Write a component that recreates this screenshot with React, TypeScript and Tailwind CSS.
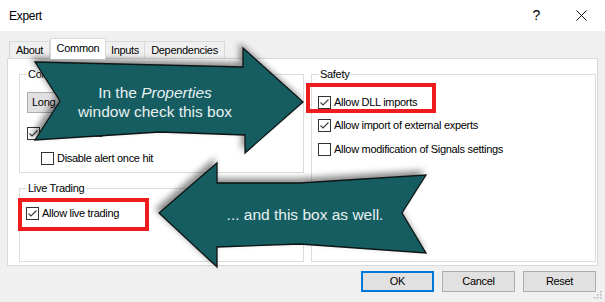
import React from "react";

const Check = ({ checked }: { checked?: boolean }) => (
  <span className="w-[13px] h-[13px] border border-[#333333] bg-white flex items-center justify-center shrink-0">
    {checked && (
      <svg width="11" height="11" viewBox="0 0 11 11">
        <path d="M1.5 5.5 L4 8 L9.5 2.5" fill="none" stroke="#3a3a3a" strokeWidth="1.1" />
      </svg>
    )}
  </span>
);

const Row = ({ checked, label, className = "" }: { checked?: boolean; label: string; className?: string }) => (
  <div className={"flex items-center h-[13px] " + className}>
    <Check checked={checked} />
    <span className="ml-[3px] leading-[13px] whitespace-nowrap">{label}</span>
  </div>
);

const Group = ({ title, className, children }: { title: string; className: string; children: React.ReactNode }) => (
  <div className={"relative border border-[#dcdcdc] " + className}>
    <span className="absolute top-[-8px] left-[7px] bg-white px-[1px] leading-[14px] whitespace-nowrap">{title}</span>
    {children}
  </div>
);

const Btn = ({ label, primary }: { label: string; primary?: boolean }) => (
  <div
    className={
      "w-[73px] h-[21px] flex items-center justify-center bg-[#e1e1e1] " +
      (primary ? "border-2 border-[#0078d7]" : "border border-[#adadad]")
    }
  >
    {label}
  </div>
);

export default function App() {
  return (
    <div className="relative w-[605px] h-[302px] overflow-hidden bg-[#f0f0f0] text-[11px] tracking-[-0.3px] text-black font-['Liberation_Sans',Arial,sans-serif]">
      {/* Title bar */}
      <div className="h-[31px] bg-white flex items-center pl-[9px]">
        <span className="text-[12px]">Expert</span>
        <span className="ml-auto text-[14px] mr-[36px]">?</span>
        <svg width="11" height="11" viewBox="0 0 11 11" className="mr-[18px]">
          <path d="M0.5 0.5 L10.5 10.5 M10.5 0.5 L0.5 10.5" stroke="#111" strokeWidth="1" />
        </svg>
      </div>

      {/* Tabs */}
      <div className="pt-[7px] pl-[9px] flex items-end h-[27px]">
        <div className="w-[41px] h-[17px] border border-b-0 border-[#d9d9d9] flex items-center justify-center">About</div>
        <div className="w-[56px] h-[21px] bg-white border border-b-0 border-[#d9d9d9] flex items-center justify-center relative z-10 mb-[-1px] pb-[1px]">Common</div>
        <div className="w-[39px] h-[17px] border border-b-0 border-l-0 border-[#d9d9d9] flex items-center justify-center">Inputs</div>
        <div className="w-[80px] h-[17px] border border-b-0 border-l-0 border-[#d9d9d9] flex items-center justify-center">Dependencies</div>
      </div>

      {/* Panel */}
      <div className="ml-[7px] w-[591px] h-[208px] bg-white border border-[#d9d9d9] flex pl-[11px] pr-[1px] pt-[15px] gap-[7px]">
        <div className="w-[285px] flex flex-col">
          <Group title="Common" className="h-[99px] pl-[7px] pt-[17px]">
            <div className="w-[140px] h-[21px] bg-[#e1e1e1] border border-[#adadad] flex items-center pl-[4px]">Long</div>
            <Row checked label="Enable alerts" className="mt-[14px]" />
            <Row label="Disable alert once hit" className="mt-[12px] ml-[14px]" />
          </Group>
          <Group title="Live Trading" className="h-[74px] mt-[15px] pl-[6px] pt-[18px]">
            <Row checked label="Allow live trading" />
          </Group>
        </div>
        <Group title="Safety" className="w-[285px] h-[188px] pl-[6px] pt-[21px]">
          <Row checked label="Allow DLL imports" />
          <Row checked label="Allow import of external experts" className="mt-[10px]" />
          <Row label="Allow modification of Signals settings" className="mt-[11px]" />
        </Group>
      </div>

      {/* Buttons */}
      <div className="flex justify-end gap-[8px] pr-[9px] mt-[5px]">
        <Btn label="OK" primary />
        <Btn label="Cancel" />
        <Btn label="Reset" />
      </div>

      {/* Resize grip */}
      <svg className="absolute right-[3px] bottom-[3px]" width="9" height="9" viewBox="0 0 9 9">
        <rect x="7" y="1" width="1.5" height="1.5" fill="#b5b5b5" />
        <rect x="4" y="4" width="1.5" height="1.5" fill="#b5b5b5" />
        <rect x="7" y="4" width="1.5" height="1.5" fill="#b5b5b5" />
        <rect x="1" y="7" width="1.5" height="1.5" fill="#b5b5b5" />
        <rect x="4" y="7" width="1.5" height="1.5" fill="#b5b5b5" />
        <rect x="7" y="7" width="1.5" height="1.5" fill="#b5b5b5" />
      </svg>

      {/* Red highlight boxes */}
      <div className="absolute left-[306px] top-[83px] w-[130px] h-[30px] border-[4px] border-[#ee1c1c]" />
      <div className="absolute left-[18px] top-[198px] w-[131px] h-[33px] border-[4px] border-[#ee1c1c]" />

      {/* Arrows */}
      <svg className="absolute left-0 top-0 pointer-events-none" width="605" height="302" viewBox="0 0 605 302">
        <defs>
          <filter id="sh" x="-20%" y="-20%" width="140%" height="140%">
            <feDropShadow dx="-3" dy="-4" stdDeviation="3" floodColor="#000" floodOpacity="0.45" />
          </filter>
        </defs>
        <polygon
          points="35,62 243,67 243,48 303,102 245,153 245,135 160,132 35,140 60,101"
          fill="#175d62"
          stroke="#0d1414"
          strokeWidth="1.3"
          strokeLinejoin="miter"
          filter="url(#sh)"
        />
        <polygon
          points="159,213 217,163 217,183 300,183 426,175 402,213 426,253 300,244 217,247 217,267"
          fill="#175d62"
          stroke="#0d1414"
          strokeWidth="1.3"
          strokeLinejoin="miter"
          filter="url(#sh)"
        />
      </svg>
      <div className="absolute left-[55px] top-[83px] w-[200px] text-center text-[15.5px] leading-[19px] tracking-normal text-[#e8f1f1]">
        <div>
          In the <span className="italic">Properties</span>
        </div>
        <div>window check this box</div>
      </div>
      <div className="absolute left-[205px] top-[205px] w-[200px] text-center text-[15.5px] leading-[19px] tracking-normal text-[#e8f1f1]">
        ... and this box as well.
      </div>
    </div>
  );
}
